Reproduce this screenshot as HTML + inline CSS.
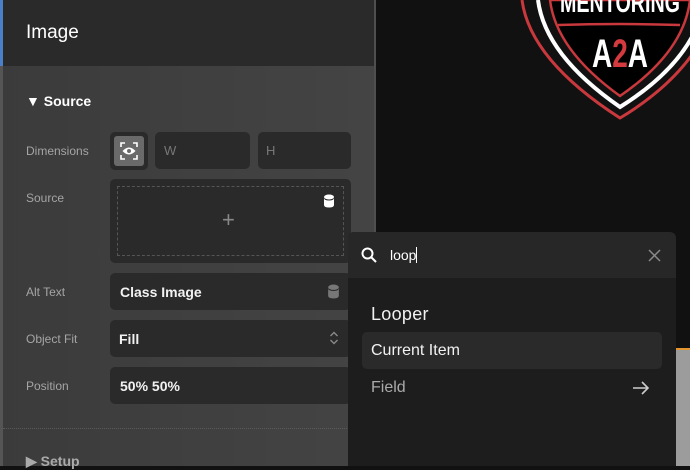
<!DOCTYPE html>
<html><head><style>
*{margin:0;padding:0;box-sizing:border-box}
body{width:690px;height:466px;overflow:hidden;background:#111;font-family:"Liberation Sans",sans-serif;position:relative}
.abs{position:absolute}
.panel{left:0;top:0;width:376px;height:466px;background:linear-gradient(90deg,#3b3b3b,#444);border-right:2px solid #4f4f4f}
.hdr{left:0;top:0;width:374px;height:66px;background:#2a2a2a;border-left:3px solid #4a80c8}
.lbl{color:#a5a5a5;font-size:12px;left:26px}
.box{background:#2a2a2a;border-radius:5px}
.val{color:#f2f2f2;font-size:14px;font-weight:bold}
</style></head><body>
<div class="abs panel"></div>
<div class="abs" style="left:0;top:66px;width:3px;height:400px;background:#555"></div>
<div class="abs hdr"><div class="abs" style="left:23px;top:22px;color:#fff;font-size:19px">Image</div></div>
<div class="abs" style="left:26px;top:93px;color:#fff;font-size:14px;font-weight:bold">&#9660;&nbsp;Source</div>

<div class="abs lbl" style="top:144px">Dimensions</div>
<div class="abs" style="left:110px;top:132px;width:38px;height:38px;background:#2a2a2a;border-radius:5px"></div>
<div class="abs" style="left:114px;top:136px;width:30px;height:30px;background:#6a6a6a;border-radius:3px">
<svg width="30" height="30" viewBox="0 0 30 30" fill="none" stroke="#fff" stroke-width="1.6"><path d="M7 11V7h4M19 7h4v4M23 19v4h-4M11 23H7v-4"/><path d="M8.5 15q6.5-7 13 0q-6.5 7-13 0z" fill="#fff" stroke="none"/><circle cx="15" cy="15" r="2" fill="#6a6a6a" stroke="none"/></svg></div>
<div class="abs box" style="left:155px;top:132px;width:95px;height:37px"><span class="abs" style="left:9px;top:11px;color:#777;font-size:13px">W</span></div>
<div class="abs box" style="left:258px;top:132px;width:93px;height:37px"><span class="abs" style="left:8px;top:11px;color:#777;font-size:13px">H</span></div>

<div class="abs lbl" style="top:191px">Source</div>
<div class="abs box" style="left:110px;top:179px;width:241px;height:84px"></div>
<div class="abs" style="left:117px;top:186px;width:227px;height:70px;border:1px dashed #555"></div>
<div class="abs" style="left:222px;top:207px;color:#888;font-size:22px;font-weight:300">+</div>
<svg class="abs" style="left:323px;top:194px" width="12" height="14" viewBox="0 0 12 14"><ellipse cx="6" cy="3" rx="5" ry="2.5" fill="#fff"/><path d="M1 4v7q0 2.5 5 2.5t5-2.5V4q0 2.5-5 2.5T1 4z" fill="#fff"/></svg>

<div class="abs lbl" style="top:285px">Alt Text</div>
<div class="abs box" style="left:110px;top:273px;width:241px;height:37px"><span class="abs val" style="left:10px;top:11px">Class Image</span></div>
<svg class="abs" style="left:327px;top:284px" width="13" height="15" viewBox="0 0 12 14"><ellipse cx="6" cy="3" rx="5" ry="2.5" fill="#777"/><path d="M1 4v7q0 2.5 5 2.5t5-2.5V4q0 2.5-5 2.5T1 4z" fill="#777"/></svg>
<div class="abs lbl" style="top:332px">Object Fit</div>
<div class="abs box" style="left:110px;top:320px;width:241px;height:37px"><span class="abs val" style="left:9px;top:11px">Fill</span></div>
<svg class="abs" style="left:329px;top:331px" width="10" height="14" viewBox="0 0 10 14" fill="none" stroke="#888" stroke-width="1.4"><path d="M1.5 5L5 1.5 8.5 5M1.5 9L5 12.5 8.5 9"/></svg>
<div class="abs lbl" style="top:379px">Position</div>
<div class="abs box" style="left:110px;top:367px;width:241px;height:37px"><span class="abs val" style="left:10px;top:11px">50% 50%</span></div>
<div class="abs" style="left:3px;top:428px;width:372px;border-top:1px dotted #5a5a5a"></div>
<div class="abs" style="left:26px;top:453px;color:#aaa;font-size:14px;font-weight:bold">&#9654;&nbsp;Setup</div>

<svg class="abs" style="left:500px;top:0" width="190" height="125" viewBox="500 0 190 125">
<path d="M522 0Q530 60 620 118Q700 70 718 0" fill="none" stroke="#c8383c" stroke-width="3"/>
<path d="M538 0Q545 55 620 107Q695 60 705 0" fill="none" stroke="#fff" stroke-width="4"/>
<path d="M550 0Q556 50 620 96Q684 52 690 0Z" fill="#000" stroke="#c8383c" stroke-width="2.5"/>
<text x="620" y="12" text-anchor="middle" fill="#fff" font-family="Liberation Sans" font-weight="bold" font-size="28" textLength="120" lengthAdjust="spacingAndGlyphs">MENTORING</text>
<path d="M558 25Q620 23 680 25" stroke="#c8383c" stroke-width="2.5" fill="none"/>
<text x="620" y="67" text-anchor="middle" font-family="Liberation Sans" font-weight="bold" font-size="40" textLength="56" lengthAdjust="spacingAndGlyphs"><tspan fill="#fff">A</tspan><tspan fill="#d43a3e">2</tspan><tspan fill="#fff">A</tspan></text>
</svg>

<div class="abs" style="left:676px;top:348px;width:14px;height:118px;background:#9c9c9c;border-top:2px solid #e3962f"></div>

<div class="abs" style="left:348px;top:232px;width:328px;height:234px;background:#1d1d1d;border-radius:6px 6px 0 0;overflow:hidden">
<div class="abs" style="left:0;top:0;width:328px;height:46px;background:#272727"></div>
<svg class="abs" style="left:13px;top:15px" width="16" height="16" viewBox="0 0 16 16" fill="none" stroke="#fff" stroke-width="2"><circle cx="6.5" cy="6.5" r="5"/><path d="M10.5 10.5L15 15"/></svg>
<div class="abs" style="left:42px;top:15px;color:#fff;font-size:14px">loop<span style="border-left:1px solid #fff;margin-left:0"></span></div>
<svg class="abs" style="left:300px;top:17px" width="13" height="13" viewBox="0 0 13 13" stroke="#888" stroke-width="1.5"><path d="M1 1L12 12M12 1L1 12"/></svg>
<div class="abs" style="left:23px;top:72px;color:#f2f2f2;font-size:18px;letter-spacing:.3px">Looper</div>
<div class="abs" style="left:14px;top:100px;width:300px;height:37px;background:#2a2a2a;border-radius:5px"></div>
<div class="abs" style="left:23px;top:110px;color:#f2f2f2;font-size:16px">Current Item</div>
<div class="abs" style="left:23px;top:147px;color:#aaa;font-size:16px">Field</div>
<svg class="abs" style="left:284px;top:149px" width="18" height="14" viewBox="0 0 18 14" fill="none" stroke="#ccc" stroke-width="1.6"><path d="M1 7h15M10 1l6 6-6 6"/></svg>
</div>
</body></html>
